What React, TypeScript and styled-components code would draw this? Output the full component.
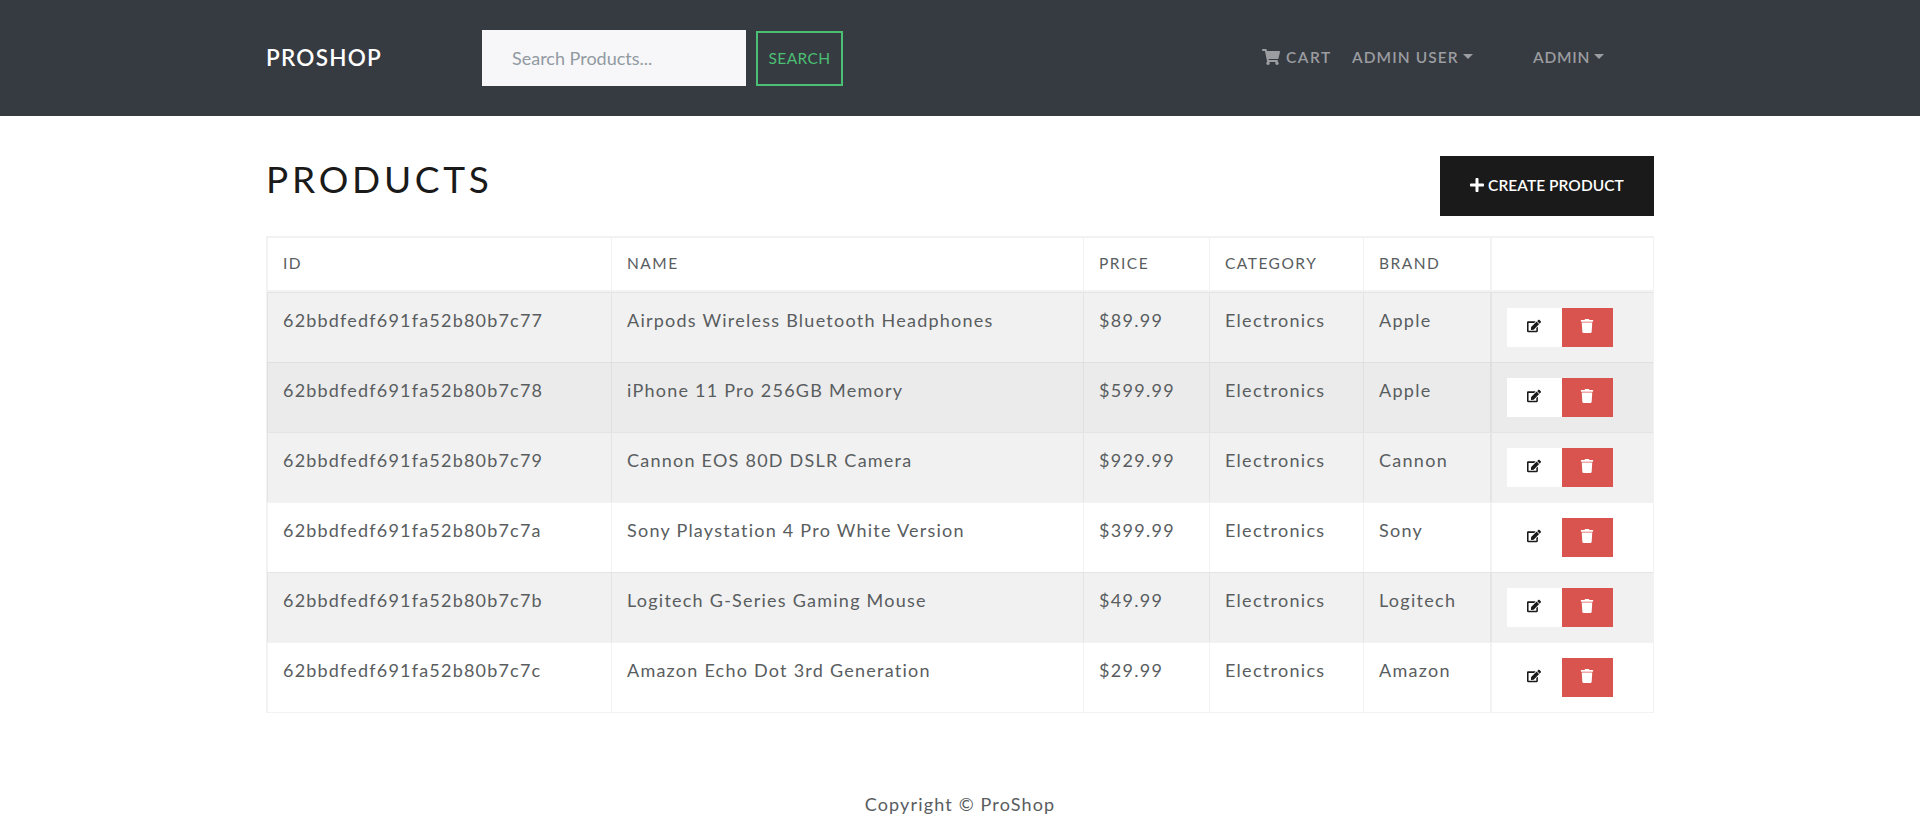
import React from "react";
import styled, { createGlobalStyle } from "styled-components";
import { FaEdit, FaPlus, FaShoppingCart, FaTrash } from "react-icons/fa";

const GlobalStyle = createGlobalStyle`
  *, *::before, *::after { box-sizing: border-box; }
  body {
    margin: 0;
    background: #fff;
    color: #595d60;
    font-family: Lato, "Nunito Sans", sans-serif;
    font-size: 18px;
    line-height: 26px;
  }
  button, input { font-family: inherit; border-radius: 0; }
`;

const Container = styled.div`
  width: 1388px;
  margin: 0 auto;
`;

const Header = styled.header`
  height: 116px;
  background: #363a41;
`;

const NavBar = styled(Container)`
  display: flex;
  align-items: center;
  height: 100%;
`;

const Brand = styled.a`
  width: 216px;
  padding-bottom: 1px;
  color: #fff;
  font-size: 22.5px;
  font-weight: 600;
  letter-spacing: 1.25px;
`;

const SearchForm = styled.form`
  display: flex;
  align-items: flex-end;
  gap: 10px;
`;

const SearchInput = styled.input`
  width: 264px;
  height: 56px;
  padding: 0 30px;
  border: 0;
  background: #f7f7f9;
  font-size: 18px;
  letter-spacing: 0;
  &::placeholder { color: #919aa1; opacity: 1; }
`;

const SearchButton = styled.button`
  width: 87px;
  height: 55px;
  padding: 0 0 2px;
  border: 2px solid #4bbf73;
  background: transparent;
  color: #4bbf73;
  font-size: 15.5px;
  letter-spacing: 0.4px;
`;

const NavLinks = styled.nav`
  display: flex;
  margin-left: auto;
  padding-bottom: 2px;
`;

const NavLink = styled.a<{ $width: number; $tracking: number }>`
  display: flex;
  align-items: center;
  width: ${(p) => p.$width}px;
  color: #9b9da0;
  font-size: 15.5px;
  font-weight: 600;
  letter-spacing: ${(p) => p.$tracking}px;
  white-space: nowrap;
  svg { margin-right: 6px; }
`;

const Caret = styled.span`
  flex: none;
  margin: -2px 0 0 4px;
  border-top: 5px solid;
  border-right: 5px solid transparent;
  border-left: 5px solid transparent;
`;

const TitleRow = styled.div`
  display: flex;
  justify-content: space-between;
  align-items: flex-start;
  padding: 40px 0 20px;
`;

const Title = styled.h1`
  margin: 0;
  color: #1a1a1a;
  font-size: 37px;
  font-weight: 400;
  line-height: 46px;
  letter-spacing: 3.75px;
`;

const CreateButton = styled.button`
  display: flex;
  align-items: center;
  justify-content: center;
  gap: 3px;
  width: 214px;
  height: 60px;
  padding: 0 1px 2px 0;
  border: 0;
  background: #1a1a1a;
  color: #fff;
  font-size: 15.5px;
  font-weight: 600;
  letter-spacing: 0.05px;
`;

const line = "rgba(0, 0, 0, 0.05)";

const Table = styled.table`
  width: 1388px;
  table-layout: fixed;
  border: 1px solid ${line};
  border-collapse: separate;
  border-spacing: 0;
`;

const HeadCell = styled.th<{ $divider?: boolean }>`
  height: 55px;
  padding: 15px 15px 0;
  border-top: 1px solid ${line};
  border-left: ${(p) => (p.$divider ? 2 : 1)}px solid ${line};
  border-bottom: 2px solid ${line};
  font-size: 15.5px;
  font-weight: 400;
  line-height: 21px;
  letter-spacing: 1.5px;
  text-align: left;
  vertical-align: top;
`;

const Row = styled.tr<{ $shade: string }>`
  background: ${(p) => p.$shade};
`;

const Cell = styled.td<{ $divider?: boolean; $tracking?: number }>`
  height: 70px;
  padding: 15px 15px 0;
  border-top: 1px solid ${line};
  border-left: ${(p) => (p.$divider ? 2 : 1)}px solid ${line};
  line-height: 24px;
  letter-spacing: ${(p) => p.$tracking ?? 1.28}px;
  vertical-align: top;
  white-space: nowrap;
`;

const Actions = styled.div`
  display: flex;
`;

const ActionButton = styled.button<{ $danger?: boolean }>`
  display: flex;
  align-items: center;
  justify-content: center;
  width: ${(p) => (p.$danger ? 51 : 55)}px;
  height: 39px;
  padding: 0 1px 3px 0;
  border: 0;
  background: ${(p) => (p.$danger ? "#d9534f" : "#fff")};
  color: ${(p) => (p.$danger ? "#fff" : "#1a1a1a")};
`;

const Footer = styled.footer`
  padding-top: 78px;
  text-align: center;
  letter-spacing: 1.15px;
`;

const columnWidths = [344, 472, 126, 154, 127, 163];

const products = [
  { id: "62bbdfedf691fa52b80b7c77", name: "Airpods Wireless Bluetooth Headphones", price: "$89.99", brand: "Apple", shade: "#f1f1f1" },
  { id: "62bbdfedf691fa52b80b7c78", name: "iPhone 11 Pro 256GB Memory", price: "$599.99", brand: "Apple", shade: "#ebebeb" },
  { id: "62bbdfedf691fa52b80b7c79", name: "Cannon EOS 80D DSLR Camera", price: "$929.99", brand: "Cannon", shade: "#f1f1f1" },
  { id: "62bbdfedf691fa52b80b7c7a", name: "Sony Playstation 4 Pro White Version", price: "$399.99", brand: "Sony", shade: "#fff" },
  { id: "62bbdfedf691fa52b80b7c7b", name: "Logitech G-Series Gaming Mouse", price: "$49.99", brand: "Logitech", shade: "#f1f1f1" },
  { id: "62bbdfedf691fa52b80b7c7c", name: "Amazon Echo Dot 3rd Generation", price: "$29.99", brand: "Amazon", shade: "#fff" },
];

export default function App() {
  return (
    <>
      <GlobalStyle />
      <Header>
        <NavBar>
          <Brand>PROSHOP</Brand>
          <SearchForm>
            <SearchInput placeholder="Search Products..." />
            <SearchButton type="button">SEARCH</SearchButton>
          </SearchForm>
          <NavLinks>
            <NavLink $width={90} $tracking={1.5}>
              <FaShoppingCart size={18} />
              CART
            </NavLink>
            <NavLink $width={181} $tracking={1.08}>
              ADMIN USER
              <Caret />
            </NavLink>
            <NavLink $width={121} $tracking={0.75}>
              ADMIN
              <Caret />
            </NavLink>
          </NavLinks>
        </NavBar>
      </Header>
      <Container as="main">
        <TitleRow>
          <Title>PRODUCTS</Title>
          <CreateButton>
            <FaPlus size={16} />
            CREATE PRODUCT
          </CreateButton>
        </TitleRow>
        <Table>
          <colgroup>
            {columnWidths.map((width, i) => (
              <col key={i} width={width} />
            ))}
          </colgroup>
          <thead>
            <tr>
              <HeadCell>ID</HeadCell>
              <HeadCell>NAME</HeadCell>
              <HeadCell>PRICE</HeadCell>
              <HeadCell>CATEGORY</HeadCell>
              <HeadCell>BRAND</HeadCell>
              <HeadCell $divider />
            </tr>
          </thead>
          <tbody>
            {products.map((p) => (
              <Row key={p.id} $shade={p.shade}>
                <Cell $tracking={1.2}>{p.id}</Cell>
                <Cell $tracking={1.24}>{p.name}</Cell>
                <Cell>{p.price}</Cell>
                <Cell>Electronics</Cell>
                <Cell>{p.brand}</Cell>
                <Cell $divider>
                  <Actions>
                    <ActionButton aria-label="Edit">
                      <FaEdit size={14} />
                    </ActionButton>
                    <ActionButton $danger aria-label="Delete">
                      <FaTrash size={14} />
                    </ActionButton>
                  </Actions>
                </Cell>
              </Row>
            ))}
          </tbody>
        </Table>
      </Container>
      <Footer>Copyright © ProShop</Footer>
    </>
  );
}
